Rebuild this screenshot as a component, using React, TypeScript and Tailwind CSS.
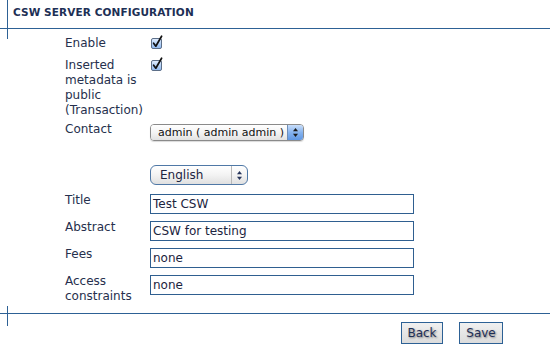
import React from "react";

const LINE = "bg-[#2d6195]";

function Check() {
  return (
    <svg width="14" height="14" viewBox="0 0 14 14" className="block">
      <defs>
        <linearGradient id="cbg" x1="0" y1="0" x2="0" y2="1">
          <stop offset="0" stopColor="#e4efff" />
          <stop offset="0.5" stopColor="#b6d2f6" />
          <stop offset="1" stopColor="#8fb8ee" />
        </linearGradient>
      </defs>
      <rect x="1.5" y="3.5" width="10" height="10" rx="1.5" fill="url(#cbg)" stroke="#5d6f88" strokeWidth="1" />
      <path d="M3.6 8.2 L5.8 11.2 L11.6 1.2" fill="none" stroke="#111" strokeWidth="1.7" strokeLinecap="round" strokeLinejoin="round" />
    </svg>
  );
}

function Arrows({ color = "#222" }: { color?: string }) {
  return (
    <svg width="7" height="11" viewBox="0 0 7 11" className="block">
      <path d="M3.5 1 L6 4.2 L1 4.2 Z" fill={color} />
      <path d="M3.5 10 L6 6.8 L1 6.8 Z" fill={color} />
    </svg>
  );
}

export default function App() {
  const label = "w-[85px] shrink-0 text-[12px] leading-[15px] text-[#26304d]";
  const input =
    "w-[264px] h-[20px] border border-[#2f5f90] bg-white px-[2px] text-[12px] leading-[18px] text-[#1c2440]";
  const btn =
    "h-[22px] border border-[#2d6195] bg-gradient-to-b from-[#f0f0f0] to-[#dcdcdc] text-[12px] leading-[20px] text-[#1f2e55] [text-shadow:1px_1px_2px_rgba(0,0,0,0.45)]";
  return (
    <div
      className="w-[550px] h-[355px] bg-white overflow-hidden"
      style={{ fontFamily: '"DejaVu Sans", Verdana, sans-serif' }}
    >
      {/* header */}
      <div className="h-[29px] flex border-b border-[#2d6195]">
        <div className="w-[8px] border-r border-[#2d6195]" />
        <div className="pl-[5px] pt-[6px] text-[10.5px] leading-[13px] font-bold text-[#1d2f55] tracking-[0.1px]">
          CSW SERVER CONFIGURATION
        </div>
      </div>

      {/* form */}
      <div className="flex">
        <div className="w-[7px] shrink-0" />
        <div className={`w-px h-[10px] shrink-0 ${LINE}`} />
        <div className="pl-[57px] pt-[7px] flex flex-col">
          <div className="flex">
            <div className={label}>Enable</div>
            <div className="-mt-[1px]">
              <Check />
            </div>
          </div>
          <div className="flex mt-[7px]">
            <div className={label}>
              Inserted
              <br />
              metadata is
              <br />
              public
              <br />
              (Transaction)
            </div>
            <div className="-mt-[1px]">
              <Check />
            </div>
          </div>
          <div className="flex mt-[4px]">
            <div className={label}>Contact</div>
            <div className="pt-[2px]">
              <div className="w-[154px] h-[17px] flex rounded-[4px] border border-[#8a8a8a] overflow-hidden shadow-[0_1px_1px_rgba(0,0,0,0.15)]">
                <div className="flex-1 bg-gradient-to-b from-[#ffffff] via-[#f4f4f4] to-[#e2e2e2] pl-[7px] text-[11px] leading-[15px] text-[#111]">
                  admin ( admin admin )
                </div>
                <div className="w-[16px] flex items-center justify-center border-l border-[#6f8fb8] bg-gradient-to-b from-[#c9defa] via-[#86b3ee] to-[#5f97e3]">
                  <Arrows color="#1a1a1a" />
                </div>
              </div>
            </div>
          </div>
          <div className="flex mt-[24px]">
            <div className="w-[85px] shrink-0" />
            <div className="w-[98px] h-[20px] flex rounded-[6px] border border-[#4f78a6] overflow-hidden bg-gradient-to-b from-[#ffffff] via-[#f3f3f3] to-[#e0e0e0]">
              <div className="flex-1 pl-[9px] text-[12px] leading-[18px] text-[#1c2440]">English</div>
              <div className="w-[16px] flex items-center justify-center border-l border-[#b8b8b8]">
                <Arrows color="#26345a" />
              </div>
            </div>
          </div>
          <div className="flex mt-[8px]">
            <div className={label}>Title</div>
            <div className="pt-[1px]">
              <div className={input}>Test CSW</div>
            </div>
          </div>
          <div className="flex mt-[6px]">
            <div className={label}>Abstract</div>
            <div className="pt-[1px]">
              <div className={input}>CSW for testing</div>
            </div>
          </div>
          <div className="flex mt-[6px]">
            <div className={label}>Fees</div>
            <div className="pt-[1px]">
              <div className={input}>none</div>
            </div>
          </div>
          <div className="flex mt-[6px]">
            <div className={label}>
              Access
              <br />
              constraints
            </div>
            <div className="pt-[1px]">
              <div className={input}>none</div>
            </div>
          </div>
        </div>
      </div>

      {/* bottom divider */}
      <div className="flex mt-[2px]">
        <div className="w-[7px] shrink-0" />
        <div className={`w-px h-[7px] ${LINE}`} />
      </div>
      <div className="flex border-t border-[#2d6195]">
        <div className="w-[7px] shrink-0" />
        <div className={`w-px h-[12px] shrink-0 ${LINE}`} />
        <div className="flex-1 flex justify-end gap-[16px] pr-[47px] pt-[8px]">
          <button className={`${btn} w-[42px]`}>Back</button>
          <button className={`${btn} w-[44px]`}>Save</button>
        </div>
      </div>
    </div>
  );
}
